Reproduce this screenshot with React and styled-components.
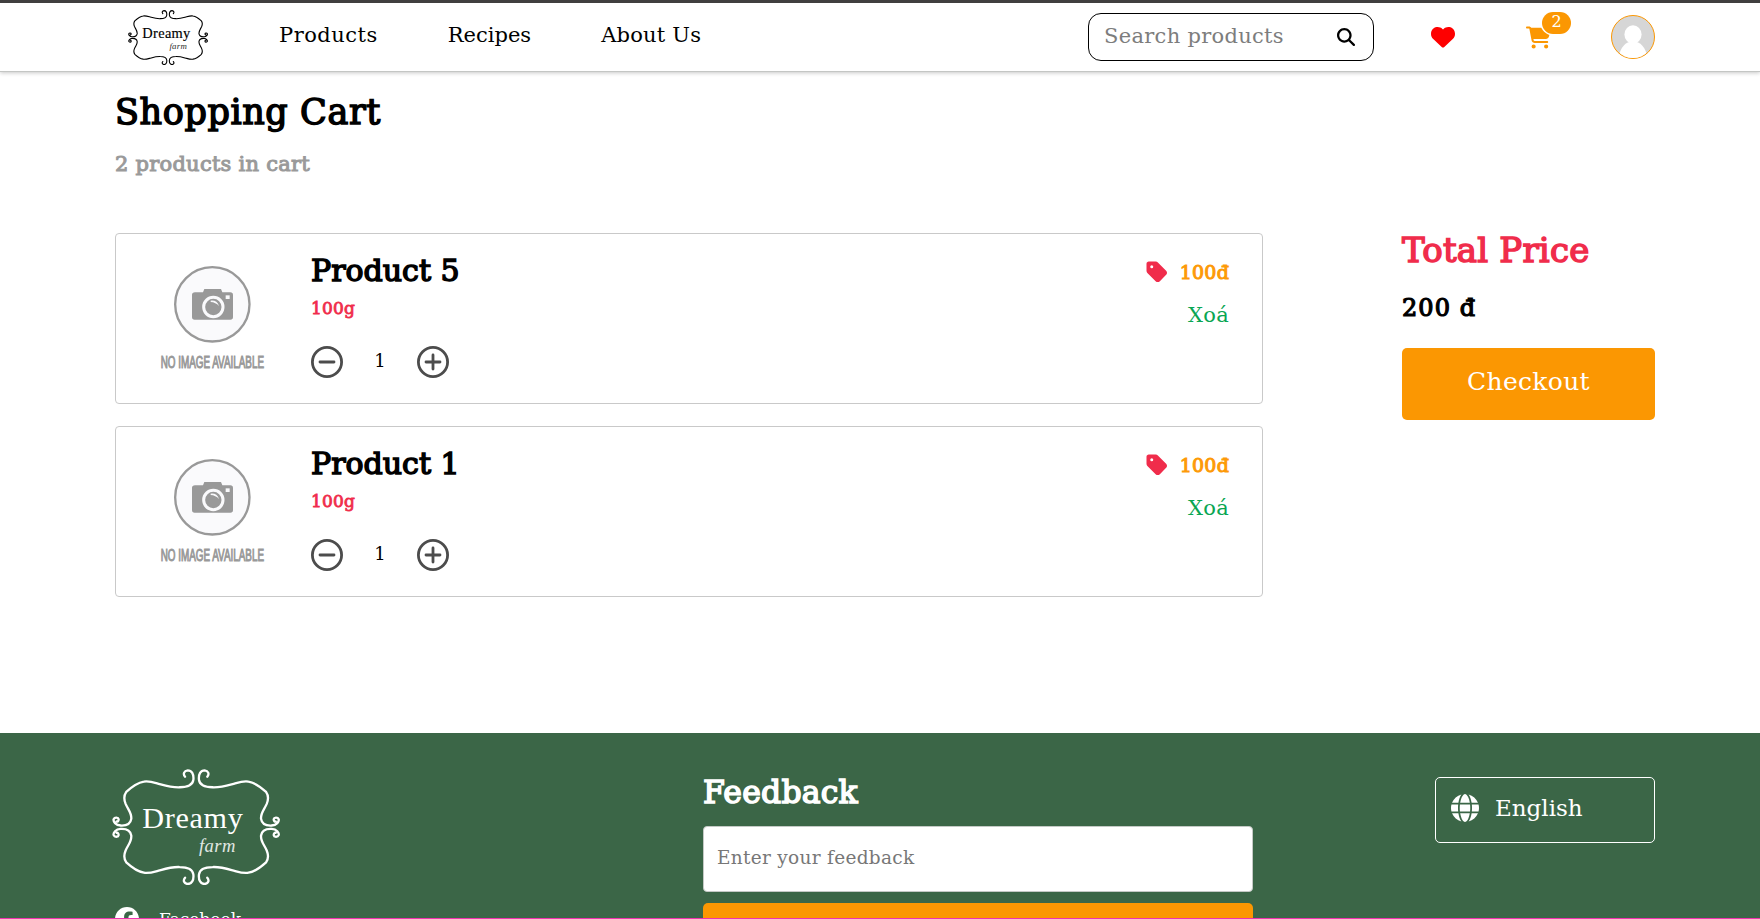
import React from "react";
import styled, { createGlobalStyle, css } from "styled-components";
import {
  FaMagnifyingGlass,
  FaHeart,
  FaCartShopping,
  FaTag,
  FaGlobe,
  FaFacebook,
} from "react-icons/fa6";

const color = {
  orange: "#fb9702",
  red: "#f02c4b",
  green: "#3b6647",
  link: "#0aa653",
  border: "#c9c9c9",
};

const GlobalStyle = createGlobalStyle`
  *, *::before, *::after { box-sizing: border-box; }
  body {
    margin: 0;
    background: #fff;
    color: #000;
    font-family: "DejaVu Serif", "Liberation Serif", serif;
  }
  h1, h2, h3, p { margin: 0; font-weight: 400; }
  button, input { font-family: inherit; }
`;

const strong = css`
  -webkit-text-stroke: ${(p) => p.$stroke || "1.5px"} currentColor;
`;

const Page = styled.div`
  display: flex;
  flex-direction: column;
  height: 919px;
  overflow: hidden;
  border-top: 3px solid #403f3f;
  border-bottom: 1px solid #f032b0;
`;

/* Header */
const Header = styled.header`
  flex: none;
  display: flex;
  align-items: center;
  height: 69px;
  padding: 0 105px 0 128px;
  border-bottom: 1px solid #c4c6c4;
  box-shadow: 0 1px 4px rgba(0, 0, 0, 0.22);
`;

const Nav = styled.nav`
  display: flex;
  gap: 70px;
  margin-left: 71px;
  padding-bottom: 5px;
`;

const NavLink = styled.a`
  font-size: 21px;
  line-height: 28px;
  letter-spacing: ${(p) => p.$spacing || "0"};
  white-space: nowrap;
`;

const SearchBox = styled.label`
  display: flex;
  align-items: center;
  justify-content: space-between;
  width: 286px;
  height: 48px;
  margin-left: auto;
  padding: 0 18px 0 15px;
  border: 1px solid #000;
  border-radius: 13px;
`;

const SearchInput = styled.input`
  width: 200px;
  height: 28px;
  padding: 0 0 3px;
  border: 0;
  outline: 0;
  background: none;
  font-size: 21px;
  letter-spacing: 0.3px;
  &::placeholder { color: #7d7d7d; opacity: 1; }
`;

const HeartLink = styled.a`
  display: flex;
  margin-left: 57px;
  color: #fe0000;
`;

const CartLink = styled.a`
  position: relative;
  display: flex;
  margin-left: 71px;
  color: ${color.orange};
`;

const Badge = styled.span`
  position: absolute;
  left: 16px;
  top: -13px;
  display: flex;
  justify-content: center;
  width: 29px;
  height: 22px;
  border-radius: 11px;
  background: ${color.orange};
  box-shadow: 0 0 0 1.5px #fff;
  color: #fff;
  font-size: 16px;
  line-height: 20px;
`;

const Avatar = styled.svg`
  width: 44px;
  height: 44px;
  margin-left: 60px;
  border: 1px solid ${color.orange};
  border-radius: 50%;
  background: #d6d6d6;
`;

/* Cart */
const Main = styled.main`
  flex: none;
  height: 661px;
  padding: 19px 105px 0 115px;
`;

const Title = styled.h1`
  ${strong}
  font-size: 35px;
  line-height: 42px;
  letter-spacing: 0.6px;
`;

const Subtitle = styled.p`
  ${strong}
  margin-top: 17px;
  color: #9a9a9a;
  font-size: 21px;
  line-height: 28px;
  letter-spacing: 0.25px;
`;

const CartLayout = styled.div`
  display: flex;
  justify-content: space-between;
  align-items: flex-start;
  margin-top: 55px;
`;

const CartList = styled.div`
  display: flex;
  flex-direction: column;
  gap: 22px;
  width: 1148px;
`;

const Card = styled.article`
  display: flex;
  align-items: flex-start;
  height: 171px;
  padding: 19px 33px 0 39px;
  border: 1px solid ${color.border};
  border-radius: 4px;
`;

const Picture = styled.svg`
  flex: none;
  width: 120px;
  height: 130px;
  margin: 2px 36px 0 0;
`;

const Name = styled.h2`
  ${strong}
  font-size: 30px;
  line-height: 36px;
`;

const Weight = styled.p`
  ${strong}
  margin-top: 9px;
  color: ${color.red};
  font-size: 17px;
  line-height: 20px;
  letter-spacing: 0.2px;
`;

const Quantity = styled.div`
  display: flex;
  align-items: center;
  margin-top: 28px;
`;

const Count = styled.span`
  width: 74px;
  padding-bottom: 2px;
  font-size: 18px;
  line-height: 24px;
  text-align: center;
`;

const RoundButton = styled.button`
  display: flex;
  padding: 0;
  border: 0;
  background: none;
  color: #4c4c4c;
`;

const CardSide = styled.div`
  display: flex;
  flex-direction: column;
  align-items: flex-end;
  margin-left: auto;
  padding-top: 7px;
`;

const Price = styled.div`
  display: flex;
  align-items: center;
  gap: 11px;
  color: ${color.red};
`;

const PriceValue = styled.span`
  ${strong}
  color: #fd9a08;
  font-size: 19px;
  line-height: 24px;
  letter-spacing: 0.2px;
`;

const Remove = styled.a`
  margin-top: 17px;
  color: ${color.link};
  font-size: 21px;
  line-height: 28px;
  letter-spacing: 0.3px;
`;

const Summary = styled.aside`
  display: flex;
  flex-direction: column;
  width: 253px;
`;

const SummaryTitle = styled.h2`
  ${strong}
  color: ${color.red};
  font-size: 34px;
  line-height: 34px;
  letter-spacing: 0.2px;
`;

const Total = styled.p`
  ${strong}
  margin-top: 26px;
  font-size: 24px;
  line-height: 30px;
  letter-spacing: 1.1px;
`;

const CheckoutButton = styled.button`
  height: 72px;
  margin-top: 25px;
  padding: 0 0 5px;
  border: 0;
  border-radius: 5px;
  background: ${color.orange};
  color: #fff;
  font-size: 25px;
  letter-spacing: 0.3px;
`;

/* Footer */
const Footer = styled.footer`
  flex: 1;
  display: grid;
  grid-template-columns: 588px 550px 1fr;
  align-items: start;
  min-height: 0;
  padding: 0 105px 0 115px;
  background: ${color.green};
  color: #fff;
`;

const Brand = styled.div`
  padding-top: 36px;
`;

const LogoSvg = styled.svg`
  display: block;
  flex: none;
  width: ${(p) => p.$width}px;
  height: ${(p) => p.$height}px;
  margin-left: ${(p) => p.$offset || 0}px;
`;

const Social = styled.a`
  display: flex;
  align-items: center;
  gap: 20px;
  margin-top: 22px;
  font-size: 17px;
  line-height: 24px;
`;

const Feedback = styled.form`
  display: flex;
  flex-direction: column;
  padding-top: 40px;
`;

const FeedbackTitle = styled.h3`
  ${strong}
  font-size: 31.5px;
  line-height: 38px;
  letter-spacing: 0.2px;
`;

const FeedbackInput = styled.input`
  height: 66px;
  margin-top: 15px;
  padding: 0 13px 4px;
  border: 1px solid #c4c9c5;
  border-radius: 4px;
  background: #fff;
  font-size: 18.5px;
  letter-spacing: 0.3px;
  &::placeholder { color: #777; opacity: 1; }
`;

const SendButton = styled.button`
  height: 64px;
  margin-top: 11px;
  border: 0;
  border-radius: 5px;
  background: ${color.orange};
`;

const Language = styled.div`
  display: flex;
  align-items: center;
  gap: 16px;
  justify-self: end;
  width: 220px;
  height: 66px;
  margin-top: 44px;
  padding: 0 15px 4px;
  border: 1px solid #fff;
  border-radius: 5px;
  font-size: 23px;
`;

const CORNER =
  "M284 138C277 130 281 120 292 119C304 119 311 130 309 148C307 163 296 170 268 170C240 171 222 164 200 158C182 153 170 151 160 153C142 156 120 172 107 184C100 194 100 208 105 220C113 238 124 248 122 265C120 279 108 286 90 285C75 284 67 273 69 266C72 259 83 260 84 266C84 271 81 274 78 273";

function Logo({ width, height, offset, stroke, textStroke = 0 }) {
  return (
    <LogoSvg $width={width} $height={height} $offset={offset} viewBox="64 115 506 349" preserveAspectRatio="none">
      <g fill="none" stroke="currentColor" strokeWidth={stroke} strokeLinecap="round">
        <path d={CORNER} />
        <path d={CORNER} transform="translate(635 0) scale(-1 1)" />
        <path d={CORNER} transform="translate(0 580) scale(1 -1)" />
        <path d={CORNER} transform="translate(635 580) scale(-1 -1)" />
      </g>
      <g fill="currentColor" fontFamily="Liberation Serif, serif">
        <text x="155" y="292" fontSize="91" textLength="303" stroke="currentColor" strokeWidth={textStroke}>Dreamy</text>
        <text x="326" y="364" fontSize="56" fontStyle="italic" textLength="110" opacity="0.85">farm</text>
      </g>
    </LogoSvg>
  );
}

function NoImage() {
  return (
    <Picture viewBox="0 0 360 390">
      <circle cx="172" cy="148" r="111.5" fill="#fafafc" stroke="#999" strokeWidth="7" />
      <path
        fill="#999"
        d="M120 112h24l4-10h50l4 10h24q8 0 8 8v66q0 8-8 8H119q-8 0-8-8v-66q0-8 9-8z"
      />
      <rect x="212" y="121" width="12" height="11" fill="#fafafc" />
      <circle cx="175" cy="156" r="29" fill="#999" stroke="#fafafc" strokeWidth="9" />
      <path d="M167 137Q186 135 192 153Q182 142 167 141z" fill="#fafafc" />
      <text
        x="17"
        y="340"
        fill="#999"
        stroke="#999"
        strokeWidth="3"
        fontFamily="Liberation Sans Narrow, Liberation Sans, sans-serif"
        fontSize="49"
        textLength="310"
        lengthAdjust="spacingAndGlyphs"
      >
        NO IMAGE AVAILABLE
      </text>
    </Picture>
  );
}

function StepButton({ plus }) {
  return (
    <RoundButton aria-label={plus ? "Increase" : "Decrease"}>
      <svg width="32" height="32" viewBox="0 0 32 32" fill="none" stroke="currentColor" strokeWidth="2.8" strokeLinecap="round">
        <circle cx="16" cy="16" r="14.6" />
        <path d={plus ? "M9 16h14M16 9v14" : "M9 16h14"} />
      </svg>
    </RoundButton>
  );
}

function CartItem({ name, weight, count, price }) {
  return (
    <Card>
      <NoImage />
      <div>
        <Name>{name}</Name>
        <Weight $stroke="0.8px">{weight}</Weight>
        <Quantity>
          <StepButton />
          <Count>{count}</Count>
          <StepButton plus />
        </Quantity>
      </div>
      <CardSide>
        <Price>
          <FaTag size={24} />
          <PriceValue $stroke="1px">{price}</PriceValue>
        </Price>
        <Remove>Xoá</Remove>
      </CardSide>
    </Card>
  );
}

const items = [
  { name: "Product 5", weight: "100g", count: 1, price: "100đ" },
  { name: "Product 1", weight: "100g", count: 1, price: "100đ" },
];

export default function App() {
  return (
    <Page>
      <GlobalStyle />
      <Header>
        <Logo width={80} height={55} stroke={7} textStroke={1} />
        <Nav>
          <NavLink $spacing="0.5px">Products</NavLink>
          <NavLink>Recipes</NavLink>
          <NavLink $spacing="0.2px">About Us</NavLink>
        </Nav>
        <SearchBox>
          <SearchInput placeholder="Search products" />
          <FaMagnifyingGlass size={18} />
        </SearchBox>
        <HeartLink>
          <FaHeart size={24} />
        </HeartLink>
        <CartLink>
          <FaCartShopping size={25} />
          <Badge>2</Badge>
        </CartLink>
        <Avatar viewBox="0 0 132 132">
          <ellipse cx="66" cy="58" rx="27" ry="29" fill="#fff" />
          <path d="M20 132Q30 80 66 80Q102 80 112 132z" fill="#fff" />
        </Avatar>
      </Header>
      <Main>
        <Title>Shopping Cart</Title>
        <Subtitle $stroke="1px">2 products in cart</Subtitle>
        <CartLayout>
          <CartList>
            {items.map((item) => (
              <CartItem key={item.name} {...item} />
            ))}
          </CartList>
          <Summary>
            <SummaryTitle>Total Price</SummaryTitle>
            <Total $stroke="1.2px">200 đ</Total>
            <CheckoutButton>Checkout</CheckoutButton>
          </Summary>
        </CartLayout>
      </Main>
      <Footer>
        <Brand>
          <Logo width={168} height={116} offset={-3} stroke={7} />
          <Social>
            <FaFacebook size={24} />
            Facebook
          </Social>
        </Brand>
        <Feedback>
          <FeedbackTitle>Feedback</FeedbackTitle>
          <FeedbackInput placeholder="Enter your feedback" />
          <SendButton type="button" aria-label="Send" />
        </Feedback>
        <Language>
          <FaGlobe size={28} />
          English
        </Language>
      </Footer>
    </Page>
  );
}
